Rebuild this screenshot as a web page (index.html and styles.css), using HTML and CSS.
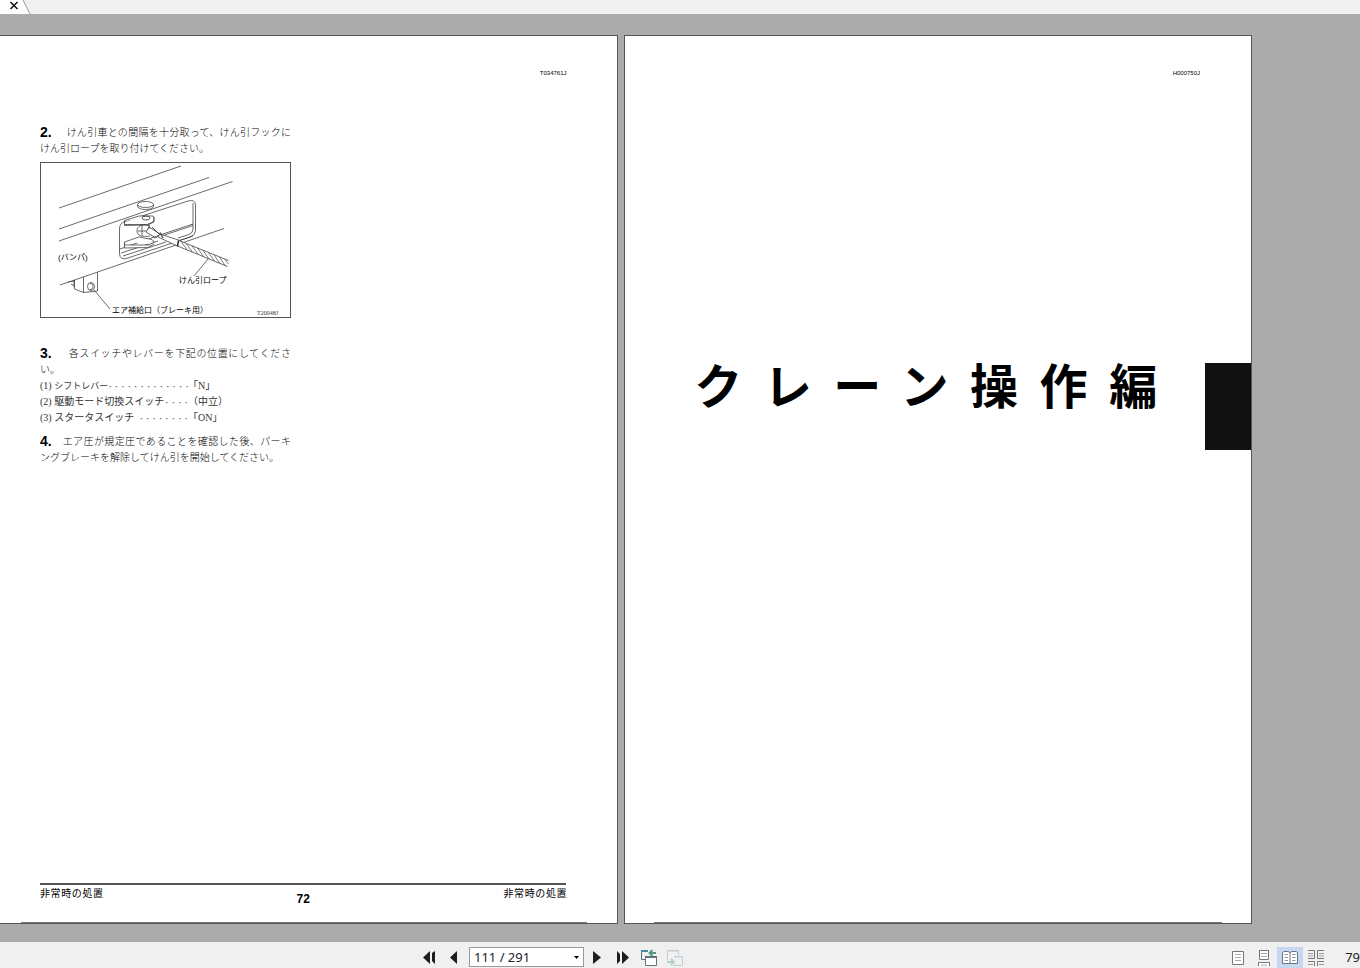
FILE: index.html
```html
<!DOCTYPE html>
<html lang="ja">
<head>
<meta charset="utf-8">
<title>111 / 291</title>
<link rel="stylesheet" href="styles.css">
</head>
<body>
<header class="tabbar">
  <button class="tab-close" aria-label="閉じる">
    <svg width="31" height="14" viewBox="0 0 31 14"><path d="M0 0H23L30 14H0Z" fill="#fff"/><path d="M23 0L30 14" stroke="#999" fill="none"/><path d="M10.500 2L17.500 9M17.500 2L10.500 9" stroke="#111" stroke-width="1.500"/></svg>
  </button>
</header>
<main class="viewer">
  <article class="page page-left">
    <p class="code">T034761J</p>
    <div class="column">
      <p class="step"><span class="lead gap-m"><b class="num">2.</b><span class="fill">けん引車との間隔を十分取って、けん引フックに</span></span><span class="rest">けん引ロープを取り付けてください。</span></p>
      <svg class="figure" viewBox="40 162 251 156" role="img" aria-label="けん引フック">
        <rect x="40.500" y="162.500" width="250" height="155" fill="#fff" stroke="#555"/>
        <g fill="none" stroke="#444" stroke-width=".8">
          <path d="M59 208L181 166M59 229L209 177.500M59 241L232.500 181.500M60 285L224 228.500"/>
          <ellipse cx="145.500" cy="204.500" rx="8" ry="3"/>
          <path d="M137.500 205v1.500c1 4 15 4 16 0V205"/>
          <path d="M119.500 229Q119.500 223 125 221.500L188 201Q195.500 199 195.500 205V231Q195.500 235 190 237L128 258Q119.500 261 119.500 253Z"/>
          <path d="M193 203V229Q193 233 189 234.500L178 238M120 249L160 235L193 224M160 236.500L193 225.500M121 253L158 241M123 256L166 242M178 241L193 236"/>
          <path d="M124.500 220.500L139 216H153Q155.500 219 153 222L147 224.500H124.500ZM124.500 221v4.500L147 225L154 222V217" fill="#fff"/>
          <ellipse cx="146" cy="218" rx="4" ry="2" stroke="#333"/>
          <path d="M124.500 242L139 237L152 239.500L154 242L149 245H124.500ZM124.500 242V248L148 247.500L154 244" fill="#fff"/>
          <path d="M142 225V236M149 224V229M150 226C142 223 137 226 137 231S142 237 150 236M138 231H146"/>
          <path d="M149 227L160 234L156 238L146 232ZM152 227L161 236" stroke="#333"/>
        </g>
        <g stroke="#444" stroke-width=".8">
          <path d="M160 234L180 240.500L177.500 246L158 237Z" fill="#fff"/>
          <path d="M179 240.500L228.500 260.500L227 266.500L177.500 246Z" fill="#fff" stroke="none"/>
          <path d="M179 240.500L228.500 260.500M177.500 246L227.500 266.500" fill="none"/>
          <path d="M178.500 240.500L177.500 246.500" stroke="#222" stroke-width="1.500"/>
          <path d="M181 241.500L187 249.500M186.500 244L192.500 252M192 246L198 254M197.500 248L203.500 256.500M203 250.500L209 259M208.500 252.500L214.500 261M214 255L220 263.500M219.500 257L225 265.500M225 259.500L228.500 264" stroke-width=".7" fill="none"/>
          <path d="M160 232.500L163 238" stroke-width="1.300"/>
        </g>
        <g fill="none" stroke="#444" stroke-width=".8">
          <path d="M208 259L194 276M94 290L110 309M83.500 277V292.500L97.500 291V272.500M83.500 292.500L74.500 289V280M68 282L75 281M71 284L75 286M74 280V287"/>
          <ellipse cx="91" cy="286.500" rx="3.500" ry="4"/><path d="M90 283.500c2 0 3 1 3 3s-1 3-3 3"/>
        </g>
        <g class="labels">
          <text x="58" y="260">(バンパ)</text>
          <text x="179" y="283">けん引ロープ</text>
          <text x="112" y="313">エア補給口（ブレーキ用）</text>
          <text class="fig-code" x="257" y="315">T20048J</text>
        </g>
      </svg>
      <p class="step"><span class="lead gap-l"><b class="num">3.</b><span class="fill">各スイッチやレバーを下記の位置にしてくださ</span></span><span class="rest">い。</span></p>
      <ul class="settings">
        <li><span class="item"><span>(1) <span class="narrow">シフトレバー</span></span><span class="dots">· · · · · · · · · · · · ·</span></span><span>「N」</span></li>
        <li><span class="item"><span>(2) 駆動モード切換スイッチ</span><span class="dots">· · · ·</span></span><span>（中立）</span></li>
        <li><span class="item"><span>(3) スタータスイッチ</span><span class="dots">· · · · · · · ·</span></span><span>「ON」</span></li>
      </ul>
      <p class="step"><span class="lead gap-s"><b class="num">4.</b><span class="fill">エア圧が規定圧であることを確認した後、パーキ</span></span><span class="rest">ングブレーキを解除してけん引を開始してください。</span></p>
    </div>
    <footer class="page-foot"><span class="section">非常時の処置</span><b class="folio">72</b><span class="section">非常時の処置</span></footer>
    <div class="edge"></div>
  </article>
  <article class="page page-right">
    <p class="code">H000750J</p>
    <div class="chapter"><h1 class="title">クレーン操作編</h1><div class="thumb"></div></div>
    <div class="edge"></div>
  </article>
</main>
<footer class="toolbar">
  <nav class="pager">
    <button class="back" aria-label="最初のページ"><svg width="14" height="13" viewBox="0 0 14 13" fill="#1c1f22"><path d="M8 0V13L1 6.500ZM10 2L13 0V13L10 10Z"/></svg></button>
    <button class="back" aria-label="前のページ"><svg width="14" height="13" viewBox="0 0 14 13" fill="#1c1f22"><path d="M11 0V13L4 6.500Z"/></svg></button>
    <label class="jump"><select aria-label="ページ"><option>111 / 291</option></select><svg class="caret" width="5" height="3" viewBox="0 0 5 3"><path d="M0 0H5L2.500 3Z"/></svg></label>
    <button aria-label="次のページ"><svg width="14" height="13" viewBox="0 0 14 13" fill="#1c1f22"><path d="M3 0V13L11 6.500Z"/></svg></button>
    <button aria-label="最後のページ"><svg width="14" height="13" viewBox="0 0 14 13" fill="#1c1f22"><path d="M6 0V13L13 6.500ZM1 0L4 3V10L1 13Z"/></svg></button>
    <button aria-label="前の表示"><svg width="18" height="17" viewBox="0 0 18 17" fill="none" stroke="#62727b"><path d="M5 10.500H1.500V1.500H8"/><path d="M1 2H8" stroke="#478ba7" stroke-width="2"/><path d="M5.500 7.500H16.500V16.500H5.500Z" fill="#fff"/><path d="M5 8H17" stroke-width="2"/><path d="M16 4H10M12.500 1L9.500 4L12.500 7" stroke="#4e9b7d" stroke-width="1.800"/></svg></button>
    <button aria-label="次の表示"><svg width="18" height="17" viewBox="0 0 18 17" fill="none" stroke="#c3cdd1"><path d="M1.500 11V1.500H12.500V6M1 2H13"/><path d="M8 7.500H16.500V16.500H7"/><path d="M8 8H17" stroke="#b9d3df"/><path d="M1 13H8M5 10L8 13L5 16" stroke="#b2d3c4" stroke-width="1.800"/></svg></button>
  </nav>
  <div class="views">
    <button aria-label="単一ページ"><svg width="16" height="16" viewBox="0 0 16 16" fill="none" stroke="#777"><path d="M2.500 1.500H13.500V14.500H2.500Z" fill="#fff"/><path d="M5 4.500H11M5 7.500H11M5 10.500H11" stroke="#aaa"/></svg></button>
    <button aria-label="連続ページ"><svg width="16" height="16" viewBox="0 0 16 16" fill="none" stroke="#777"><path d="M3.500 0V9.500H12.500V0M3.500 .5H12.500M2.500 16V12.500H13.500V16" fill="#fff"/><path d="M5 3.500H11M5 6.500H11M5 15H11" stroke="#aaa"/></svg></button>
    <button class="active" aria-label="見開きページ"><svg width="16" height="16" viewBox="0 0 16 16" fill="none" stroke="#6d7480"><path d="M.5 2.500L2 1.500H6L8 2.500L10 1.500H14L15.500 2.500V13.500H.5ZM8 2.500V14" fill="#fff"/><path d="M2.500 4.500H6M2.500 7.500H6M2.500 10.500H6M10 4.500H13.500M10 7.500H13.500M10 10.500H13.500" stroke="#8f97a3"/></svg></button>
    <button aria-label="連続見開きページ"><svg width="16" height="16" viewBox="0 0 16 16" fill="none" stroke="#777"><path d="M0 .5H6.500V8.500H0M16 .5H9.500V8.500H16M0 11.500H6.500V16M16 11.500H9.500V16"/><path d="M0 3.500H5M0 6H5M11 3.500H16M11 6H16M0 14.500H5M11 14.500H16" stroke="#999"/></svg></button>
    <span class="zoom">79</span>
  </div>
</footer>
</body>
</html>
```
FILE: styles.css
```css
* { box-sizing: border-box; }
body {
  margin: 0;
  min-height: 100vh;
  display: flex;
  flex-direction: column;
  overflow-x: hidden;
  background: #ababab;
  color: #222;
  font-family: "Liberation Sans", "Noto Sans CJK JP", sans-serif;
}
p, h1, ul { margin: 0; padding: 0; }
button { border: 0; padding: 0; background: none; display: flex; align-items: center; justify-content: center; }
svg { display: block; }

.tabbar { height: 14px; background: #f0f0f0; display: flex; }

.viewer {
  flex: 1;
  display: grid;
  grid-template-columns: 618fr 627fr;
  gap: 6px;
  padding: 21px 108px 18px 0;
}
.page {
  background: #fff;
  border: 1px solid #555;
  display: flex;
  flex-direction: column;
}
.page-left { border-left: 0; }
.code { margin: 33px 51px 0 0; font-size: 6px; line-height: 8px; text-align: right; color: #000; }

.column { width: 251px; margin: 48px 0 0 40px; }
.step {
  font-family: "Liberation Serif", "Noto Sans CJK JP", serif;
  font-size: 10px;
  font-weight: 300;
  line-height: 16px;
  color: #000;
}
.lead { display: flex; height: 16px; }
.fill { flex: 1; text-align-last: justify; white-space: nowrap; }
.rest { display: block; }
.num { font-family: "Liberation Sans", sans-serif; font-size: 14px; font-weight: 700; line-height: 14px; }
.gap-s { gap: 11px; }
.gap-m { gap: 15px; }
.gap-l { gap: 17px; }
.figure { width: 100%; margin: 5px 0 28px; }
.labels { font-size: 8px; fill: #000; }
.fig-code { font-family: "Liberation Serif", serif; font-size: 6px; fill: #333; }
.settings {
  margin-bottom: 8px;
  list-style: none;
  font-family: "Liberation Serif", "Noto Sans CJK JP", serif;
  font-size: 10px;
  line-height: 16px;
  color: #333;
}
.settings li { display: flex; height: 16px; white-space: nowrap; }
.item { width: 148px; display: flex; justify-content: space-between; }
.narrow { font-size: 9px; }
.dots { font-size: 11px; }

.page-foot {
  margin: auto 51px 0 40px;
  border-top: 2px solid #555;
  padding-top: 2px;
  display: flex;
  justify-content: space-between;
  font-size: 10px;
  line-height: 14px;
  color: #000;
}
.section { width: 63px; text-align-last: justify; }
.folio { padding-top: 5px; font-size: 12px; }
.edge { height: 1px; margin: 16px 30px 0 21px; background: #777; }

.chapter { display: flex; align-items: flex-start; margin-top: 286px; }
.title {
  width: 74%;
  margin: -5px 0 0 11%;
  font-size: 48px;
  line-height: 60px;
  font-weight: 700;
  color: #000;
  text-align: justify;
  text-align-last: justify;
}
.thumb { width: 46px; height: 87px; margin-left: auto; background: #111; }
.page-right .edge { margin: auto 29px 0; }

.toolbar {
  display: flex;
  height: 26px;
  padding-top: 5px;
  background: #f0f0f0;
}
.pager { display: flex; margin-left: 30.66%; }
.pager button, .views button { width: 26px; height: 21px; }
.pager .back { width: 24px; }
.jump { position: relative; width: 115px; height: 20px; margin-left: 4px; }
.jump select {
  width: 100%;
  height: 20px;
  padding: 0 4px;
  appearance: none;
  border: 1px solid #999;
  border-radius: 0;
  background: #fff;
  color: #222;
  font: 13px "Noto Sans", sans-serif;
}
.caret { position: absolute; right: 5px; top: 9px; }
.views { display: flex; margin-left: auto; }
.views .active { background: #c6d7f1; }
.zoom { padding-left: 16px; font: 13px/20px "Noto Sans", sans-serif; }
```
